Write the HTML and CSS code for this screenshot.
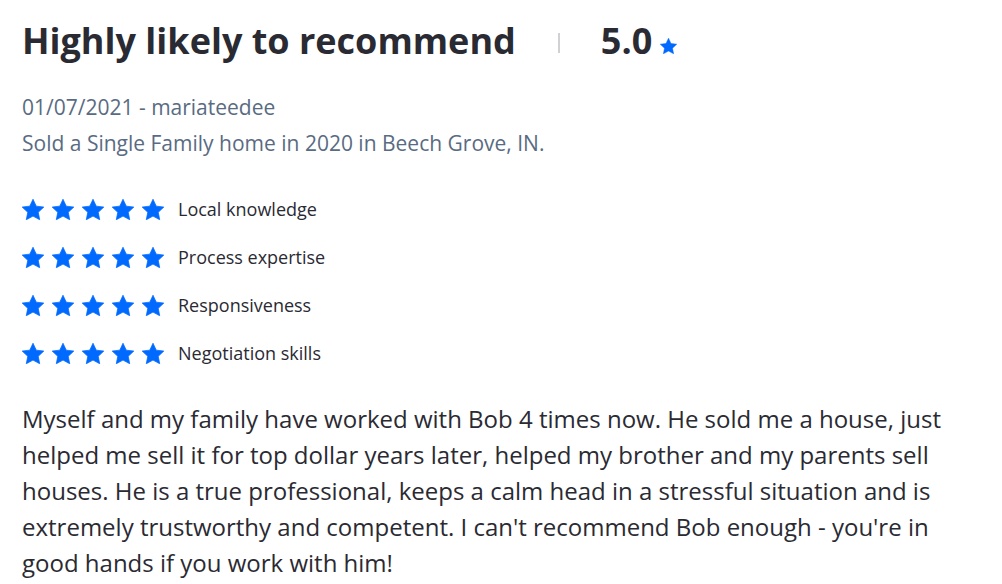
FILE: index.html
```html
<!DOCTYPE html>
<html>
<head>
<meta charset="utf-8">
<link rel="stylesheet" href="styles.css">
</head>
<body>
<div class="review">
  <div class="header">
    <h1 class="title">Highly likely to recommend</h1>
    <span class="divider"></span>
    <span class="score">5.0</span>
    <svg class="score-star" viewBox="1.6 1.6 20.8 20"><path d="M12 1.8l3.1 6.6 7.2.9-5.3 5 1.4 7.1L12 17.9l-6.4 3.5L7 14.3l-5.3-5 7.2-.9z" stroke-linejoin="round" stroke-width="0.6"/></svg>
  </div>
  <div class="meta">
    <div>01/07/2021 - mariateedee</div>
    <div>Sold a Single Family home in 2020 in Beech Grove, IN.</div>
  </div>
  <ul class="ratings">
    <li class="rating"><span class="stars"><svg viewBox="1.6 1.6 20.8 20"><path d="M12 1.8l3.1 6.6 7.2.9-5.3 5 1.4 7.1L12 17.9l-6.4 3.5L7 14.3l-5.3-5 7.2-.9z"/></svg><svg viewBox="1.6 1.6 20.8 20"><path d="M12 1.8l3.1 6.6 7.2.9-5.3 5 1.4 7.1L12 17.9l-6.4 3.5L7 14.3l-5.3-5 7.2-.9z"/></svg><svg viewBox="1.6 1.6 20.8 20"><path d="M12 1.8l3.1 6.6 7.2.9-5.3 5 1.4 7.1L12 17.9l-6.4 3.5L7 14.3l-5.3-5 7.2-.9z"/></svg><svg viewBox="1.6 1.6 20.8 20"><path d="M12 1.8l3.1 6.6 7.2.9-5.3 5 1.4 7.1L12 17.9l-6.4 3.5L7 14.3l-5.3-5 7.2-.9z"/></svg><svg viewBox="1.6 1.6 20.8 20"><path d="M12 1.8l3.1 6.6 7.2.9-5.3 5 1.4 7.1L12 17.9l-6.4 3.5L7 14.3l-5.3-5 7.2-.9z"/></svg></span><span class="label">Local knowledge</span></li>
    <li class="rating"><span class="stars"><svg viewBox="1.6 1.6 20.8 20"><path d="M12 1.8l3.1 6.6 7.2.9-5.3 5 1.4 7.1L12 17.9l-6.4 3.5L7 14.3l-5.3-5 7.2-.9z"/></svg><svg viewBox="1.6 1.6 20.8 20"><path d="M12 1.8l3.1 6.6 7.2.9-5.3 5 1.4 7.1L12 17.9l-6.4 3.5L7 14.3l-5.3-5 7.2-.9z"/></svg><svg viewBox="1.6 1.6 20.8 20"><path d="M12 1.8l3.1 6.6 7.2.9-5.3 5 1.4 7.1L12 17.9l-6.4 3.5L7 14.3l-5.3-5 7.2-.9z"/></svg><svg viewBox="1.6 1.6 20.8 20"><path d="M12 1.8l3.1 6.6 7.2.9-5.3 5 1.4 7.1L12 17.9l-6.4 3.5L7 14.3l-5.3-5 7.2-.9z"/></svg><svg viewBox="1.6 1.6 20.8 20"><path d="M12 1.8l3.1 6.6 7.2.9-5.3 5 1.4 7.1L12 17.9l-6.4 3.5L7 14.3l-5.3-5 7.2-.9z"/></svg></span><span class="label">Process expertise</span></li>
    <li class="rating"><span class="stars"><svg viewBox="1.6 1.6 20.8 20"><path d="M12 1.8l3.1 6.6 7.2.9-5.3 5 1.4 7.1L12 17.9l-6.4 3.5L7 14.3l-5.3-5 7.2-.9z"/></svg><svg viewBox="1.6 1.6 20.8 20"><path d="M12 1.8l3.1 6.6 7.2.9-5.3 5 1.4 7.1L12 17.9l-6.4 3.5L7 14.3l-5.3-5 7.2-.9z"/></svg><svg viewBox="1.6 1.6 20.8 20"><path d="M12 1.8l3.1 6.6 7.2.9-5.3 5 1.4 7.1L12 17.9l-6.4 3.5L7 14.3l-5.3-5 7.2-.9z"/></svg><svg viewBox="1.6 1.6 20.8 20"><path d="M12 1.8l3.1 6.6 7.2.9-5.3 5 1.4 7.1L12 17.9l-6.4 3.5L7 14.3l-5.3-5 7.2-.9z"/></svg><svg viewBox="1.6 1.6 20.8 20"><path d="M12 1.8l3.1 6.6 7.2.9-5.3 5 1.4 7.1L12 17.9l-6.4 3.5L7 14.3l-5.3-5 7.2-.9z"/></svg></span><span class="label">Responsiveness</span></li>
    <li class="rating"><span class="stars"><svg viewBox="1.6 1.6 20.8 20"><path d="M12 1.8l3.1 6.6 7.2.9-5.3 5 1.4 7.1L12 17.9l-6.4 3.5L7 14.3l-5.3-5 7.2-.9z"/></svg><svg viewBox="1.6 1.6 20.8 20"><path d="M12 1.8l3.1 6.6 7.2.9-5.3 5 1.4 7.1L12 17.9l-6.4 3.5L7 14.3l-5.3-5 7.2-.9z"/></svg><svg viewBox="1.6 1.6 20.8 20"><path d="M12 1.8l3.1 6.6 7.2.9-5.3 5 1.4 7.1L12 17.9l-6.4 3.5L7 14.3l-5.3-5 7.2-.9z"/></svg><svg viewBox="1.6 1.6 20.8 20"><path d="M12 1.8l3.1 6.6 7.2.9-5.3 5 1.4 7.1L12 17.9l-6.4 3.5L7 14.3l-5.3-5 7.2-.9z"/></svg><svg viewBox="1.6 1.6 20.8 20"><path d="M12 1.8l3.1 6.6 7.2.9-5.3 5 1.4 7.1L12 17.9l-6.4 3.5L7 14.3l-5.3-5 7.2-.9z"/></svg></span><span class="label">Negotiation skills</span></li>
  </ul>
  <p class="body">Myself and my family have worked with Bob 4 times now. He sold me a house, just helped me sell it for top dollar years later, helped my brother and my parents sell houses. He is a true professional, keeps a calm head in a stressful situation and is extremely trustworthy and competent. I can't recommend Bob enough - you're in good hands if you work with him!</p>
</div>
</body>
</html>
```
FILE: styles.css
```css
html, body {
  margin: 0;
  padding: 0;
  background: #ffffff;
}
body {
  font-family: "Open Sans", "Noto Sans", sans-serif;
  color: #2a2a33;
}
.review {
  padding: 17px 0 0 22px;
  width: 950px;
}
.header {
  display: flex;
  align-items: center;
  height: 48px;
}
.title {
  margin: 0;
  font-size: 36px;
  font-weight: 700;
  line-height: 48px;
  color: #2a2a33;
}
.divider {
  width: 2px;
  height: 20px;
  background: #d1d1d5;
  margin: 4px 41px 0 42px;
}
.score {
  font-size: 36px;
  font-weight: 700;
  line-height: 48px;
}
.score-star {
  width: 17px;
  height: 16px;
  fill: #006aff;
  stroke: #006aff;
  margin: 10px 0 0 8px;
}
.meta {
  margin-top: 24px;
  font-size: 21px;
  line-height: 36px;
  color: #596b82;
}
.ratings {
  list-style: none;
  margin: 24px 0 0 0;
  padding: 0;
}
.rating {
  display: flex;
  align-items: center;
  height: 48px;
}
.stars {
  display: flex;
  gap: 8px;
}
.stars svg {
  width: 22px;
  height: 21px;
  fill: #006aff;
  stroke: #006aff;
  stroke-width: 0.7;
  stroke-linejoin: round;
}
.label {
  margin-left: 14px;
  font-size: 18px;
  color: #2a2a33;
}
.body {
  margin: 24px 0 0 0;
  font-size: 24px;
  line-height: 36px;
  color: #2a2a33;
}
```
